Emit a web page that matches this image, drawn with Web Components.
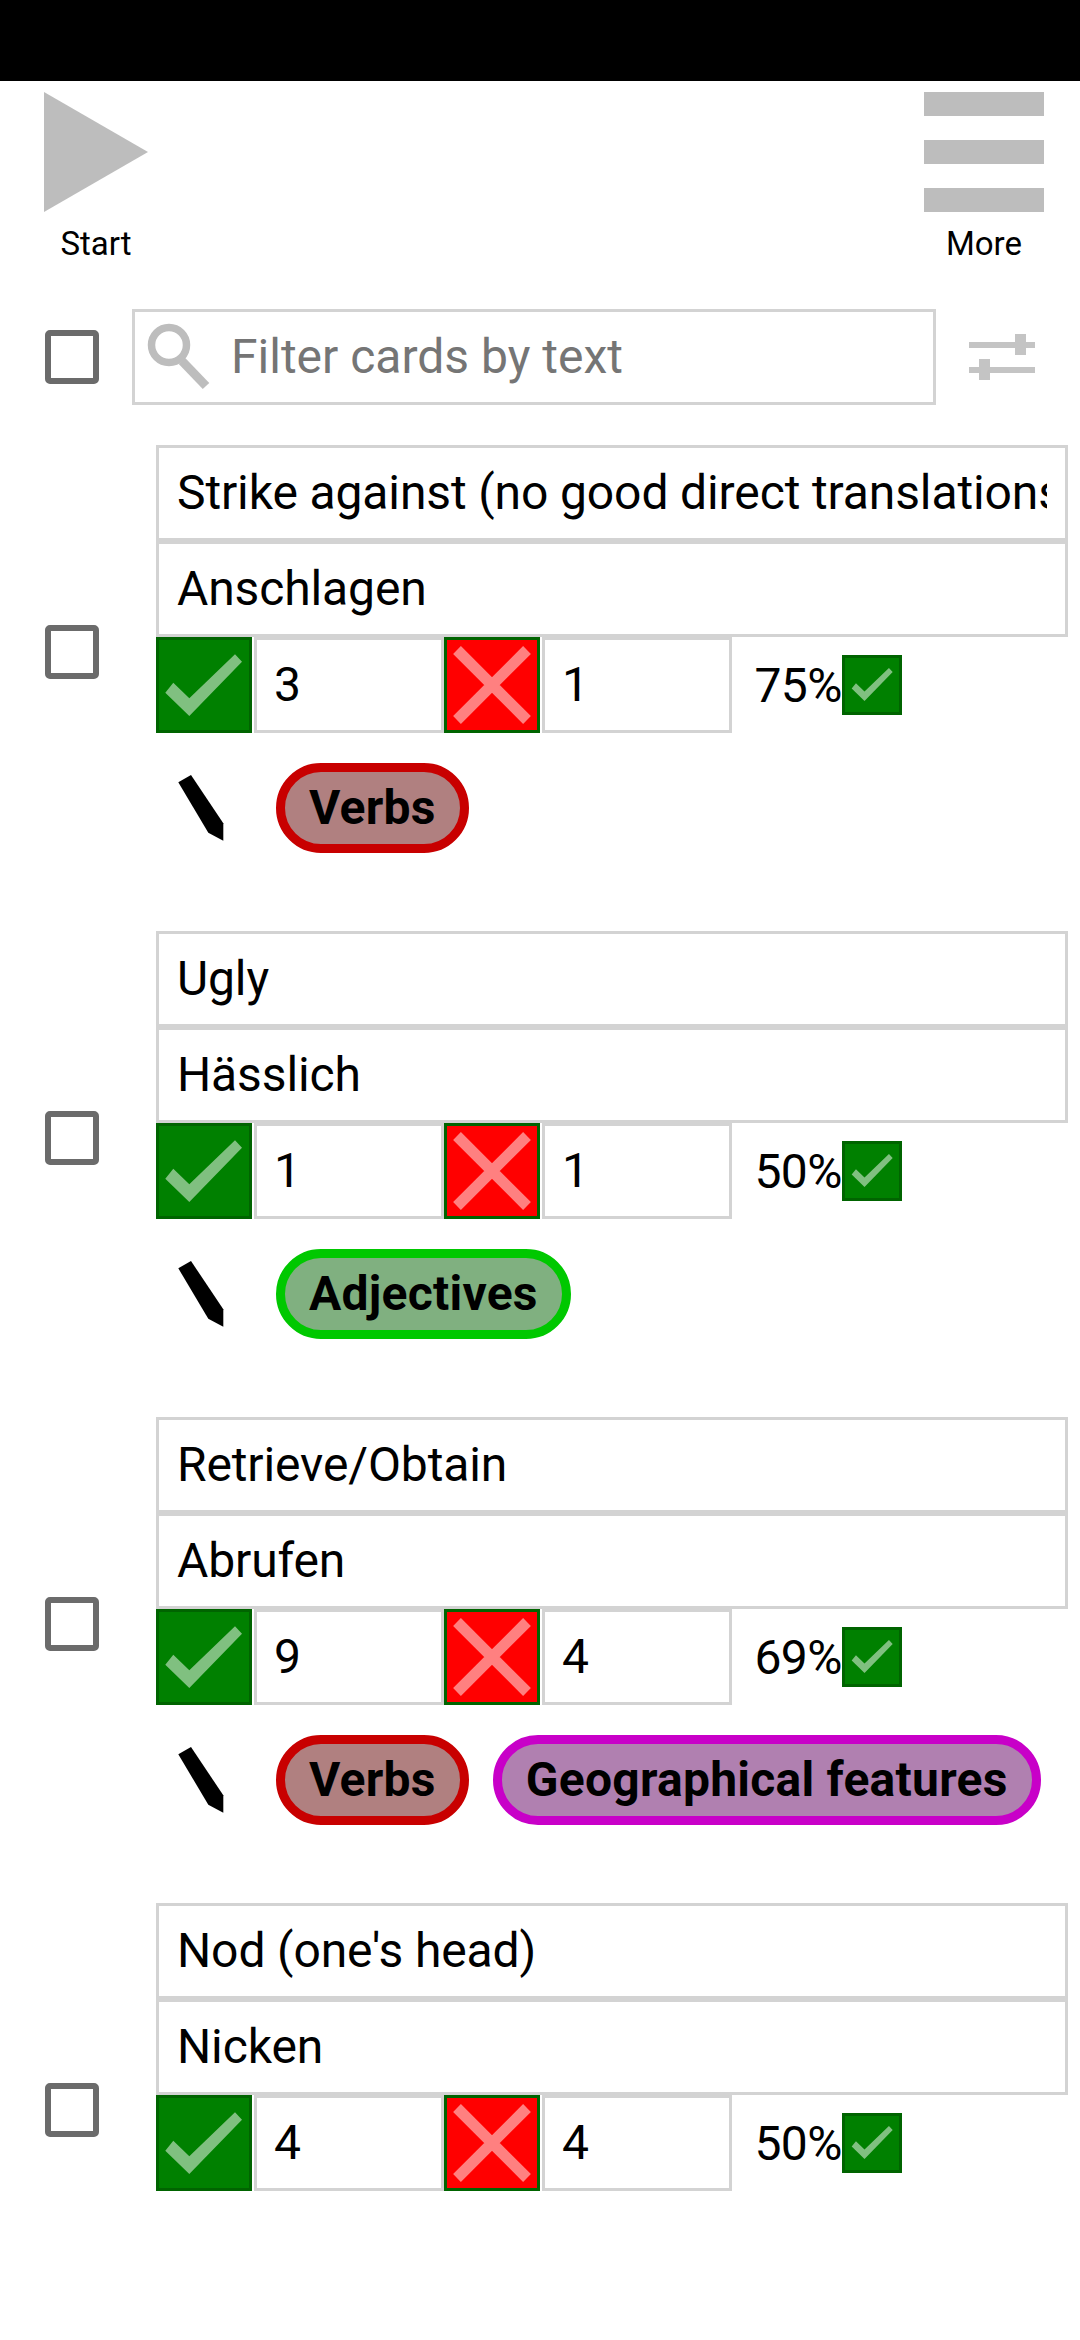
<!DOCTYPE html>
<html>
<head>
<meta charset="utf-8">
<title>Cards</title>
<style>
  html, body { margin: 0; padding: 0; background: #fff; }
  body { font-family: Roboto, sans-serif; color: #000; }
</style>
</head>
<body>
<app-screen></app-screen>

<script>
const CHECK = "9.3,55.7 17.3,45.7 33.3,61.3 79,17.3 86,24.7 33.3,79";

// one big square button, green tick or red cross
class IconBox extends HTMLElement {
  constructor() {
    super();
    this.attachShadow({ mode: "open" });
  }

  connectedCallback() {
    const wrong = this.getAttribute("kind") === "wrong";
    const small = this.hasAttribute("small");
    const glyph = wrong
      ? `<path d="M13 13L83 83M83 13L13 83" stroke="#ff8080" stroke-width="11" fill="none"/>`
      : `<polygon points="${CHECK}" fill="#80c080"/>`;
    this.shadowRoot.innerHTML = `
    <style>
      :host{
        display: block;
        flex: none;
        box-sizing: border-box;
        width: ${small ? 60 : 96}px;
        height: ${small ? 60 : 96}px;
        border: 3px solid #006400;
        background-color: ${wrong ? "#ff0000" : "#008000"};
      }
      svg{
        display: block;
        width: 100%;
        height: 100%;
      }
    </style>
    <svg viewBox="${small ? "-3.2 -1.4 101 101" : "3 3 90 90"}">${glyph}</svg>`;
  }
}

class TickBox extends HTMLElement {
  constructor() {
    super();
    this.attachShadow({ mode: "open" });
    this.shadowRoot.innerHTML = `
    <style>
      :host{
        display: block;
        flex: none;
        box-sizing: border-box;
        width: 54px;
        height: 54px;
        border: 6px solid #6b6b6b;
        border-radius: 5px;
        background: #fff;
      }
    </style>`;
  }
}

// text box with the grey border
class TextField extends HTMLElement {
  constructor() {
    super();
    this.attachShadow({ mode: "open" });
    this.shadowRoot.innerHTML = `
    <style>
      :host{
        display: block;
        box-sizing: border-box;
        height: 96px;
        border: 3px solid #d3d3d3;
        padding: 0 18px;
        font-size: 48px;
        line-height: 90px;
        letter-spacing: -0.12px;
      }
      div{
        overflow: hidden;
        white-space: nowrap;
      }
    </style>
    <div><slot></slot></div>`;
  }
}

class TagPill extends HTMLElement {
  constructor() {
    super();
    this.attachShadow({ mode: "open" });
    this.shadowRoot.innerHTML = `
    <style>
      :host{
        display: block;
        flex: none;
        box-sizing: border-box;
        height: 90px;
        padding: 0 24px;
        border: 9px solid var(--edge);
        border-radius: 45px;
        background: var(--fill);
        font-size: 48px;
        font-weight: 700;
        line-height: 72px;
        letter-spacing: 0.25px;
        white-space: nowrap;
      }
    </style>
    <slot></slot>`;
  }
}

class ToolButton extends HTMLElement {
  constructor() {
    super();
    this.attachShadow({ mode: "open" });
    this.shadowRoot.innerHTML = `
    <style>
      :host{
        display: flex;
        flex-direction: column;
        align-items: center;
        width: 120px;
        font-size: 33px;
      }
      span{
        display: block;
        margin-top: 13px;
        line-height: 38px;
      }
    </style>
    <slot name="icon"></slot>
    <span>${this.getAttribute("label")}</span>`;
  }
}

class SearchRow extends HTMLElement {
  constructor() {
    super();
    this.attachShadow({ mode: "open" });
    this.shadowRoot.innerHTML = `
    <style>
      :host{
        display: flex;
        align-items: center;
        padding-left: 45px;
        margin-top: 46px;
      }
      .box{
        display: flex;
        align-items: center;
        box-sizing: border-box;
        width: 804px;
        height: 96px;
        margin-left: 33px;
        border: 3px solid #d3d3d3;
        font-size: 48px;
        color: #757575;
      }
      .box svg{
        flex: none;
      }
      .box span{
        margin-left: 16px;
        margin-top: -2px;
      }
      .filter{
        margin-left: 33px;
        flex: none;
      }
    </style>
    <tick-box></tick-box>
    <div class="box">
      <svg width="80" height="90" viewBox="0 0 80 90">
        <circle cx="34" cy="33" r="17.5" fill="none" stroke="#bdbdbd" stroke-width="7.5"/>
        <path d="M47 49L71 74" stroke="#bdbdbd" stroke-width="9" fill="none"/>
      </svg>
      <span>Filter cards by text</span>
    </div>
    <svg class="filter" width="66" height="46" viewBox="0 0 66 46" fill="#c4c4c4">
      <rect x="0" y="8" width="66" height="6"/>
      <rect x="46" y="0" width="11" height="21"/>
      <rect x="0" y="33" width="66" height="6"/>
      <rect x="10" y="25" width="11" height="21"/>
    </svg>`;
  }
}

class AppBar extends HTMLElement {
  constructor() {
    super();
    this.attachShadow({ mode: "open" });
    this.shadowRoot.innerHTML = `
    <style>
      :host{
        display: flex;
        justify-content: space-between;
        padding: 11px 36px 0 36px;
      }
    </style>
    <tool-button label="Start">
      <svg slot="icon" width="104" height="120" viewBox="0 0 104 120" style="display:block">
        <polygon points="0,0 104,60 0,120" fill="#bdbdbd"/>
      </svg>
    </tool-button>
    <tool-button label="More">
      <div slot="icon" style="display:grid;gap:24px;width:120px">
        <i style="display:block;height:24px;background:#bdbdbd"></i>
        <i style="display:block;height:24px;background:#bdbdbd"></i>
        <i style="display:block;height:24px;background:#bdbdbd"></i>
      </div>
    </tool-button>`;
  }
}

// one flash card: question, answer, right/wrong counts, tags
class CardItem extends HTMLElement {
  constructor() {
    super();
    this.attachShadow({ mode: "open" });
  }

  connectedCallback() {
    const a = (n) => this.getAttribute(n);
    this.shadowRoot.innerHTML = `
    <style>
      :host{
        display: flex;
        align-items: center;
        height: 414px;
        padding: 0 12px 0 45px;
        margin-bottom: 72px;
      }
      tick-box{
        margin-right: 57px;
      }
      .body{
        flex: 1;
        min-width: 0;
        align-self: flex-start;
      }
      .counts{
        display: flex;
        align-items: center;
      }
      .counts text-field{
        flex: none;
        width: 190px;
        margin-left: 2px;
        padding-left: 17px;
      }
      .counts .pct{
        width: 110px;
        text-align: right;
        font-size: 48px;
        letter-spacing: -0.5px;
        white-space: nowrap;
      }
      .tags{
        display: flex;
        align-items: center;
        gap: 24px;
        height: 90px;
        margin-top: 30px;
      }
    </style>
    <tick-box></tick-box>
    <div class="body">
      <text-field>${a("front")}</text-field>
      <text-field>${a("back")}</text-field>
      <div class="counts">
        <icon-box kind="right"></icon-box>
        <text-field>${a("right")}</text-field>
        <icon-box kind="wrong"></icon-box>
        <text-field>${a("wrong")}</text-field>
        <div class="pct">${a("pct")}</div>
        <icon-box kind="right" small></icon-box>
      </div>
      <div class="tags">
        <slot></slot>
      </div>
    </div>`;
  }
}

class AppScreen extends HTMLElement {
  constructor() {
    super();
    this.attachShadow({ mode: "open" });
    this.shadowRoot.innerHTML = `
    <style>
      :host{
        display: block;
        height: 2340px;
        overflow: hidden;
        background: #fff;
      }
      .status{
        height: 81px;
        background: #000;
      }
      .list{
        margin-top: 40px;
      }
    </style>
    <div class="status"></div>
    <app-bar></app-bar>
    <search-row></search-row>
    <div class="list">
      <card-item front="Strike against (no good direct translations" back="Anschlagen" right="3" wrong="1" pct="75%">
        ${this._pen()}
        <tag-pill style="--edge:#c80000;--fill:#b08080">Verbs</tag-pill>
      </card-item>
      <card-item front="Ugly" back="Hässlich" right="1" wrong="1" pct="50%">
        ${this._pen()}
        <tag-pill style="--edge:#00c800;--fill:#80b080">Adjectives</tag-pill>
      </card-item>
      <card-item front="Retrieve/Obtain" back="Abrufen" right="9" wrong="4" pct="69%">
        ${this._pen()}
        <tag-pill style="--edge:#c80000;--fill:#b08080">Verbs</tag-pill>
        <tag-pill style="--edge:#c800c8;--fill:#b080b0">Geographical features</tag-pill>
      </card-item>
      <card-item front="Nod (one's head)" back="Nicken" right="4" wrong="4" pct="50%"></card-item>
    </div>`;
  }

  _pen() {
    return `<svg width="46" height="66" viewBox="0 0 46 66" style="flex:none;margin:0 28px 0 22px">
      <polygon points="0.3,7.3 13,0 45.3,48.3 45.3,65.7 30.3,57.7" fill="#000"/>
    </svg>`;
  }
}

customElements.define("icon-box", IconBox);
customElements.define("tick-box", TickBox);
customElements.define("text-field", TextField);
customElements.define("tag-pill", TagPill);
customElements.define("tool-button", ToolButton);
customElements.define("search-row", SearchRow);
customElements.define("app-bar", AppBar);
customElements.define("card-item", CardItem);
customElements.define("app-screen", AppScreen);
</script>
</body>
</html>
